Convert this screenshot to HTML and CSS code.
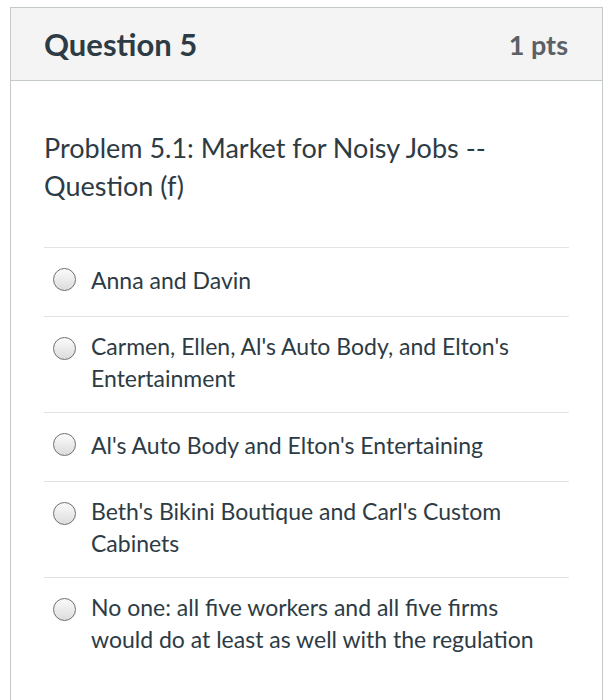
FILE: index.html
```html
<!DOCTYPE html>
<html>
<head>
<meta charset="utf-8">
<link rel="stylesheet" href="styles.css">
</head>
<body>
<div class="card">
  <div class="card-header">
    <span class="q-title">Question 5</span>
    <span class="q-pts">1 pts</span>
  </div>
  <div class="card-body">
    <p class="prompt">Problem 5.1: Market for Noisy Jobs --<br>Question (f)</p>
    <div class="answers">
      <div class="answer"><span class="radio"></span><span class="label"><span>Anna and Davin</span></span></div>
      <div class="answer"><span class="radio"></span><span class="label"><span>Carmen, Ellen, Al's Auto Body, and Elton's Entertainment</span></span></div>
      <div class="answer"><span class="radio"></span><span class="label"><span>Al's Auto Body and Elton's Entertaining</span></span></div>
      <div class="answer"><span class="radio"></span><span class="label"><span>Beth's Bikini Boutique and Carl's Custom Cabinets</span></span></div>
      <div class="answer"><span class="radio"></span><span class="label"><span>No one: all five workers and all five firms would do at least as well with the regulation</span></span></div>
    </div>
  </div>
</div>
</body>
</html>
```

FILE: styles.css
```css
html, body {
  margin: 0;
  padding: 0;
  background: #fff;
}
body {
  padding: 7px 7px 0 10px;
  font-family: Lato, "Open Sans", sans-serif;
  color: #2d3b45;
}
.card {
  border: 1px solid #c4c9cc;
  border-bottom: none;
  height: 720px;
  box-sizing: border-box;
}
.card-header {
  background: #f4f4f4;
  border-bottom: 1px solid #c4c9cc;
  height: 72px;
  display: flex;
  align-items: center;
  justify-content: space-between;
  padding: 0 34px 0 33px;
}
.q-title {
  font-size: 31px;
  font-weight: 700;
  color: #2d3b45;
}
.q-pts {
  font-size: 27px;
  font-weight: 700;
  color: #5b6166;
}
.card-body {
  padding: 0 33px;
}
.prompt {
  margin: 0;
  padding: 48px 0 42px;
  font-size: 27px;
  line-height: 38px;
}
.answer {
  display: flex;
  align-items: flex-start;
  border-top: 1px solid #e3e3e3;
  padding: 13px 24px 18px 0;
}
.radio {
  flex: none;
  width: 21px;
  height: 21px;
  border: 1.5px solid #6d6f71;
  border-radius: 50%;
  background: linear-gradient(#fbfbfb, #dcdcdc);
  margin: 7px 0 0 9px;
}
.label {
  display: flex;
  align-items: center;
  min-height: 37px;
  margin-left: 15px;
  font-size: 23px;
  line-height: 32px;
}
```
